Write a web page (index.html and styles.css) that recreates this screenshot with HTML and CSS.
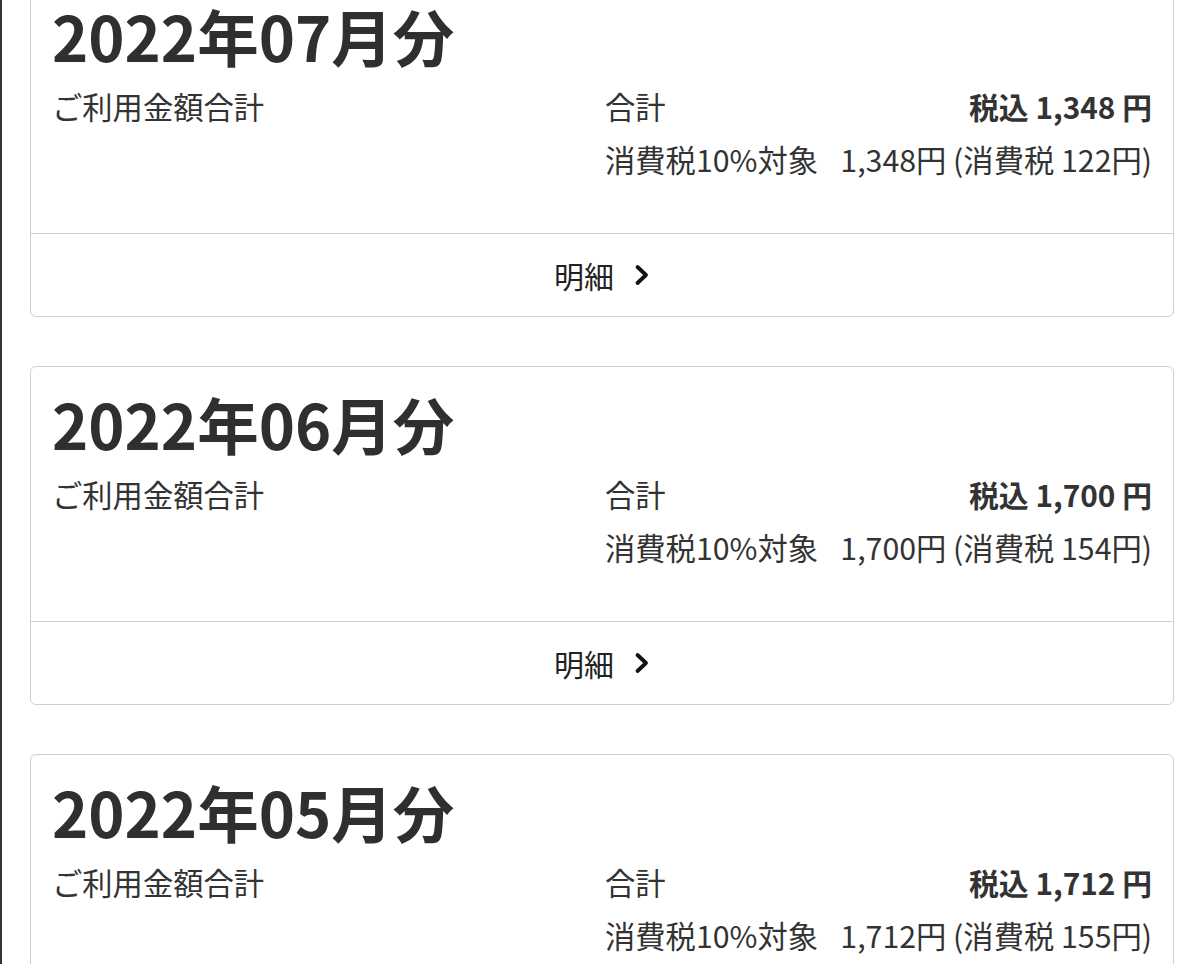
FILE: index.html
```html
<!DOCTYPE html>
<html lang="ja">
<head>
<meta charset="utf-8">
<link rel="stylesheet" href="styles.css">
</head>
<body>
<div class="page">
  <div class="card">
    <div class="card-body">
      <h2 class="month">2022年07月分</h2>
      <div class="summary">
        <div class="label">ご利用金額合計</div>
        <div class="amounts">
          <div class="row"><span>合計</span><span class="total">税込 1,348 円</span></div>
          <div class="row"><span>消費税10%対象</span><span>1,348円 (消費税 122円)</span></div>
        </div>
      </div>
    </div>
    <a class="card-footer" href="#">明細 <svg class="chev" viewBox="0 0 16 24" width="16" height="24"><path d="M3.5 4 L12 12 L3.5 20" fill="none" stroke="#111" stroke-width="3.8" stroke-linecap="round" stroke-linejoin="round"/></svg></a>
  </div>
  <div class="card">
    <div class="card-body">
      <h2 class="month">2022年06月分</h2>
      <div class="summary">
        <div class="label">ご利用金額合計</div>
        <div class="amounts">
          <div class="row"><span>合計</span><span class="total">税込 1,700 円</span></div>
          <div class="row"><span>消費税10%対象</span><span>1,700円 (消費税 154円)</span></div>
        </div>
      </div>
    </div>
    <a class="card-footer" href="#">明細 <svg class="chev" viewBox="0 0 16 24" width="16" height="24"><path d="M3.5 4 L12 12 L3.5 20" fill="none" stroke="#111" stroke-width="3.8" stroke-linecap="round" stroke-linejoin="round"/></svg></a>
  </div>
  <div class="card">
    <div class="card-body">
      <h2 class="month">2022年05月分</h2>
      <div class="summary">
        <div class="label">ご利用金額合計</div>
        <div class="amounts">
          <div class="row"><span>合計</span><span class="total">税込 1,712 円</span></div>
          <div class="row"><span>消費税10%対象</span><span>1,712円 (消費税 155円)</span></div>
        </div>
      </div>
    </div>
    <a class="card-footer" href="#">明細 <svg class="chev" viewBox="0 0 16 24" width="16" height="24"><path d="M3.5 4 L12 12 L3.5 20" fill="none" stroke="#111" stroke-width="3.8" stroke-linecap="round" stroke-linejoin="round"/></svg></a>
  </div>
</div>
</body>
</html>
```
FILE: styles.css
```css
html, body {
  margin: 0;
  padding: 0;
  background: #fff;
}
body {
  border-left: 2px solid #333;
  font-family: "Noto Sans CJK JP", "Noto Sans", sans-serif;
  color: #333;
  min-height: 964px;
  box-sizing: border-box;
}
.page {
  padding: 0 26px 0 28px;
  margin-top: -22px;
}
.card {
  border: 1px solid #cfcfcf;
  border-radius: 6px;
  margin-bottom: 49px;
  background: #fff;
}
.card-body {
  padding: 19px 21px 48px;
}
.month {
  margin: 0 0 6px;
  font-size: 61.5px;
  line-height: 76px;
  font-weight: 700;
  color: #2f2f2f;
}
.summary {
  display: grid;
  grid-template-columns: 1fr 1fr;
  column-gap: 6px;
  font-size: 30.3px;
}
.label {
  line-height: 52px;
}
.row {
  display: flex;
  justify-content: space-between;
  line-height: 52px;
}
.row + .row {
  margin-top: 1px;
}
.total {
  font-weight: 700;
  font-size: 29.8px;
}
.card-footer {
  display: flex;
  align-items: center;
  justify-content: center;
  gap: 20px;
  height: 82px;
  border-top: 1px solid #cfcfcf;
  font-size: 30px;
  color: #222;
  text-decoration: none;
}
.chev {
  display: block;
}
```
